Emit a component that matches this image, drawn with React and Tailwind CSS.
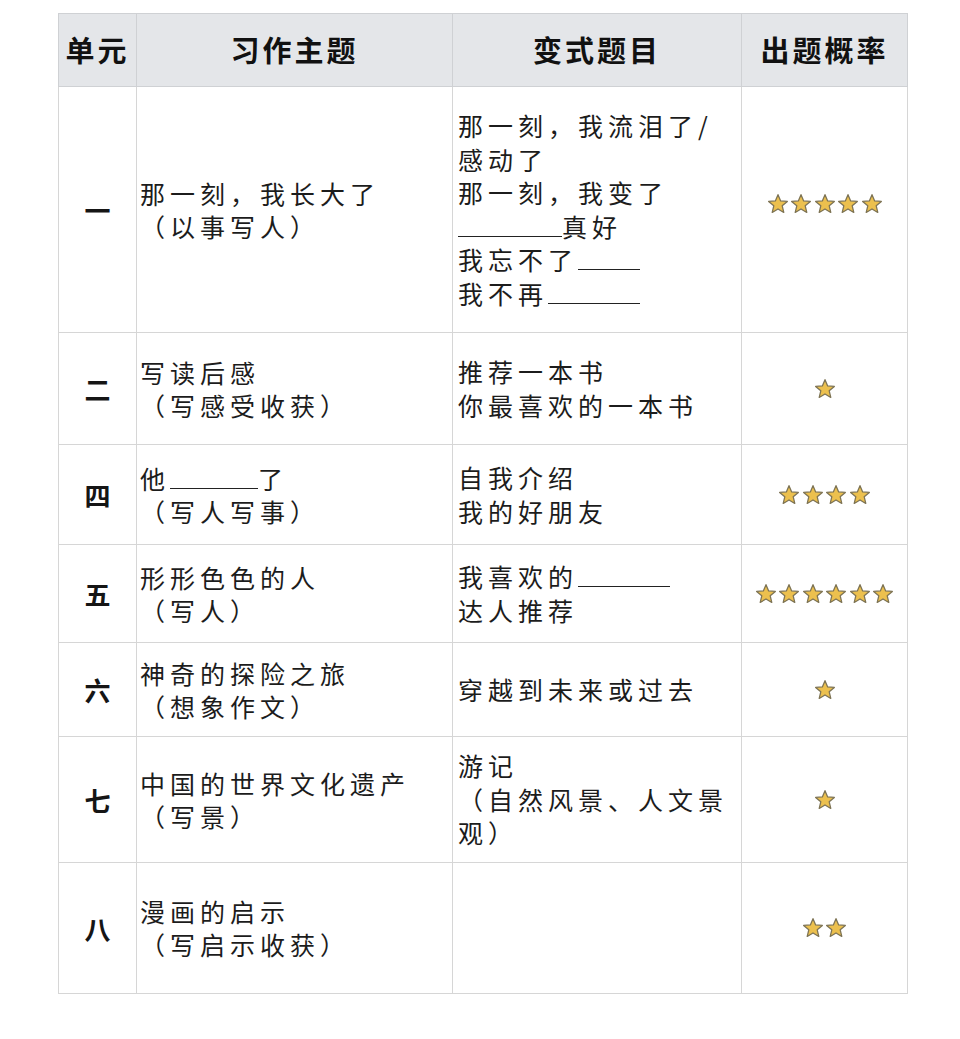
import React from "react";

const Star = () => (
  <svg width="22" height="22" viewBox="0 0 24 24" className="shrink-0">
    <polygon
      points="12,1.8 14.9,8.6 22.2,9.2 16.6,14 18.3,21.2 12,17.4 5.7,21.2 7.4,14 1.8,9.2 9.1,8.6"
      fill="#ecc04e"
      stroke="#7d7354"
      strokeWidth="1.4"
      strokeLinejoin="round"
    />
  </svg>
);

const Stars = ({ n, up }) => (
  <div className={up ? "mb-[12px] flex justify-center gap-[1.5px]" : "flex justify-center gap-[1.5px]"}>
    {Array.from({ length: n }).map((_, i) => (
      <Star key={i} />
    ))}
  </div>
);

const Blank = ({ w }) => (
  <span
    className="inline-block border-b-[1.5px] border-[#222] align-baseline"
    style={{ width: w, height: "1.05em" }}
  />
);

const rows = [
  {
    unit: "一",
    h: 246,
    up: true,
    theme: ["那一刻，我长大了", "（以事写人）"],
    variant: [
      <>那一刻，我流泪了/感动了</>,
      <>那一刻，我变了</>,
      <>
        <Blank w={104} />真好
      </>,
      <>
        我忘不了<Blank w={62} />
      </>,
      <>
        我不再<Blank w={92} />
      </>,
    ],
    stars: 5,
  },
  {
    unit: "二",
    h: 112,
    theme: ["写读后感", "（写感受收获）"],
    variant: [<>推荐一本书</>, <>你最喜欢的一本书</>],
    stars: 1,
  },
  {
    unit: "四",
    h: 100,
    theme: [
      <>
        他<Blank w={88} />了
      </>,
      "（写人写事）",
    ],
    variant: [<>自我介绍</>, <>我的好朋友</>],
    stars: 4,
  },
  {
    unit: "五",
    h: 98,
    theme: ["形形色色的人", "（写人）"],
    variant: [
      <>
        我喜欢的<Blank w={92} />
      </>,
      <>达人推荐</>,
    ],
    stars: 6,
  },
  {
    unit: "六",
    h: 94,
    theme: ["神奇的探险之旅", "（想象作文）"],
    variant: [<>穿越到未来或过去</>],
    stars: 1,
  },
  {
    unit: "七",
    h: 126,
    theme: ["中国的世界文化遗产", "（写景）"],
    variant: [<>游记</>, <>（自然风景、人文景观）</>],
    stars: 1,
  },
  {
    unit: "八",
    h: 131,
    theme: ["漫画的启示", "（写启示收获）"],
    variant: [],
    stars: 2,
  },
];

const font = {
  fontFamily: '"Noto Sans CJK SC", "Noto Sans", sans-serif',
};

export default function App() {
  return (
    <div className="min-h-[1039px] w-[960px] bg-white pt-[13px] pl-[58px]" style={font}>
      <table className="table-fixed border-collapse text-[#1c1c1c]">
        <colgroup>
          <col className="w-[78px]" />
          <col className="w-[316px]" />
          <col className="w-[289px]" />
          <col className="w-[166px]" />
        </colgroup>
        <thead>
          <tr className="h-[73px] bg-[#e4e6e9]">
            {["单元", "习作主题", "变式题目", "出题概率"].map((t) => (
              <th
                key={t}
                className="border border-[#cfd1d4] text-center text-[29px] font-bold tracking-[3px] text-[#111]"
              >
                {t}
              </th>
            ))}
          </tr>
        </thead>
        <tbody>
          {rows.map((r) => (
            <tr key={r.unit} style={{ height: r.h }}>
              <td className="border border-[#d6d6d6] text-center text-[26px] font-bold text-[#151515]">
                {r.unit}
              </td>
              <td className="border border-[#d6d6d6] pl-[3px] text-[25px] leading-[33px] tracking-[5px]">
                {r.theme.map((t, i) => (
                  <div key={i}>{t}</div>
                ))}
              </td>
              <td className="border border-[#d6d6d6] pl-[5px] pr-[2px] text-[25px] leading-[33.5px] tracking-[5px]">
                {r.variant.map((t, i) => (
                  <div key={i}>{t}</div>
                ))}
              </td>
              <td className="border border-[#d6d6d6]">
                <Stars n={r.stars} up={r.up} />
              </td>
            </tr>
          ))}
        </tbody>
      </table>
    </div>
  );
}
